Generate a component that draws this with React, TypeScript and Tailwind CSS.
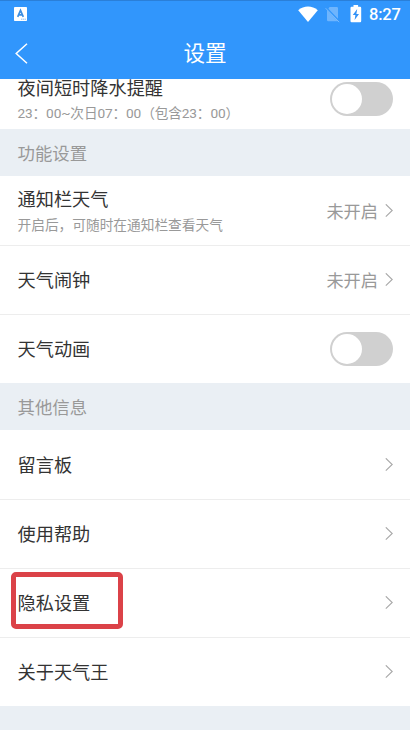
import { clsx } from 'clsx'
import type { ReactNode } from 'react'

function StatusBar() {
  return (
    <div className="flex h-7 items-center justify-between border-t border-[#2a7fd8] pl-3.5 pr-2 text-white">
      <svg className="mb-px" width="13" height="14" viewBox="0 0 13 14">
        <rect width="13" height="14" rx="0.8" fill="#fff" />
        <path d="M3.7 9.8 6.5 3.4 9.3 9.8M4.7 7.8h3.6" fill="none" stroke="#3f8fe0" strokeWidth="1.7" />
        <path d="M7 12.2h5" stroke="#8fbff0" strokeWidth="1" strokeDasharray="1.5 0.5" />
      </svg>
      <div className="flex items-center pb-[2px]">
        <svg width="20" height="16" viewBox="0 0 20 16">
          <path d="M10 16 .2 4.2C5.8-.8 14.2-.8 19.8 4.2Z" fill="#fff" />
        </svg>
        <svg className="ml-[7px] mt-px" width="15" height="17" viewBox="0 0 15 17">
          <path d="M4.6 1h7.2q1.2 0 1.2 1.2v10.6L3.4 2.8ZM2 4.2l10.8 11H3.2Q2 15.2 2 14Z" fill="#fff" opacity="0.3" />
          <path d="M.6 2.2 14.2 16.2" stroke="#fff" strokeWidth="1" opacity="0.35" />
        </svg>
        <svg className="ml-[10px]" width="12" height="18" viewBox="0 0 12 18">
          <path d="M3.5 0h4.6v1.8h2Q11.2 1.8 11.2 3v13q0 1.2-1.1 1.2H1.6Q.5 17.2.5 16V3q0-1.2 1.1-1.2h1.9Z" fill="#fff" />
          <path d="M7.2 4 2.8 10h2.6l-.8 5 4.4-6H6.4Z" fill="#3192f7" />
        </svg>
        <span className="ml-[7px] w-[33px] whitespace-nowrap pt-[3px] text-[16.5px] font-medium leading-5 tracking-[-0.2px]">8:27</span>
      </div>
    </div>
  )
}

function Toggle() {
  return (
    <div className="flex h-[34px] w-[63px] items-center rounded-full bg-[#d0d0d0] pl-[2px]">
      <div className="h-[30px] w-[30px] rounded-full bg-white" />
    </div>
  )
}

function Chevron() {
  return (
    <svg className="mb-px" width="9" height="14" viewBox="0 0 9 14" fill="none" stroke="#a8a8a8" strokeWidth="1.1">
      <path d="M1.8.3 8.2 6.5 1.8 12.7" />
    </svg>
  )
}

interface RowProps {
  title: string
  sub?: string
  value?: string
  toggle?: boolean
  last?: boolean
  highlight?: boolean
}

function Row({ title, sub, value, toggle, last, highlight }: RowProps) {
  return (
    <div
      className={clsx(
        'relative flex w-full shrink-0 items-center justify-between pl-[17.5px] pr-[17px]',
        last ? 'h-[68px]' : 'h-[69px] border-b border-[#ededed]',
      )}
    >
      <div className="pt-[2px]">
        <div className="text-[18.2px] leading-[26px] text-[#333]">{title}</div>
        {sub && <div className="text-[13.7px] leading-6 text-[#999]">{sub}</div>}
      </div>
      {toggle ? (
        <Toggle />
      ) : (
        <div className="flex items-center gap-[6px]">
          {value && <span className="pt-[2px] text-[17.2px] leading-6 text-[#999]">{value}</span>}
          <Chevron />
        </div>
      )}
      {highlight && (
        <div className="absolute left-[11px] top-[3px] h-[57px] w-[112px] rounded-[5px] border-[5px] border-[#db4248]" />
      )}
    </div>
  )
}

function SectionTitle({ children }: { children: ReactNode }) {
  return (
    <div className="flex h-[47px] shrink-0 items-center bg-[#eaeff4] pl-[17.5px] pt-1 text-[17.4px] text-[#999]">
      {children}
    </div>
  )
}

export default function App() {
  return (
    <div className="flex h-[730px] w-[410px] flex-col overflow-hidden bg-white font-[Roboto,'Noto_Sans_CJK_SC',sans-serif]">
      <header className="h-[79px] shrink-0 bg-[#3196fc]">
        <StatusBar />
        <div className="grid h-[51px] grid-cols-3 items-center pb-px">
          <svg className="ml-[15px]" width="13" height="21" viewBox="0 0 13 21" fill="none" stroke="#fff" strokeWidth="1.5">
            <path d="M12 .7 1.2 10.5 12 20.3" />
          </svg>
          <h1 className="pt-[2px] text-center text-[21.6px] leading-8 text-white">设置</h1>
        </div>
      </header>

      {/* sits tight under the header, the list is scrolled */}
      <div className="flex h-[50px] shrink-0 items-start justify-between pl-[17.5px] pr-[17px]">
        <div>
          <div className="text-[18.2px] leading-5 text-[#333]">夜间短时降水提醒</div>
          <div className="mt-[2px] text-[13.7px] leading-6 tracking-[-0.15px] text-[#999]">
            23：00~次日07：00（包含23：00）
          </div>
        </div>
        <div className="pt-[3px]">
          <Toggle />
        </div>
      </div>

      <SectionTitle>功能设置</SectionTitle>
      <div className="pt-px">
        <Row title="通知栏天气" sub="开启后，可随时在通知栏查看天气" value="未开启" />
        <Row title="天气闹钟" value="未开启" />
        <Row title="天气动画" toggle last />
      </div>

      <SectionTitle>其他信息</SectionTitle>
      <div className="pt-px">
        <Row title="留言板" />
        <Row title="使用帮助" />
        <Row title="隐私设置" highlight />
        <Row title="关于天气王" last />
      </div>
      <div className="flex-1 bg-[#eaeff4]" />
    </div>
  )
}
